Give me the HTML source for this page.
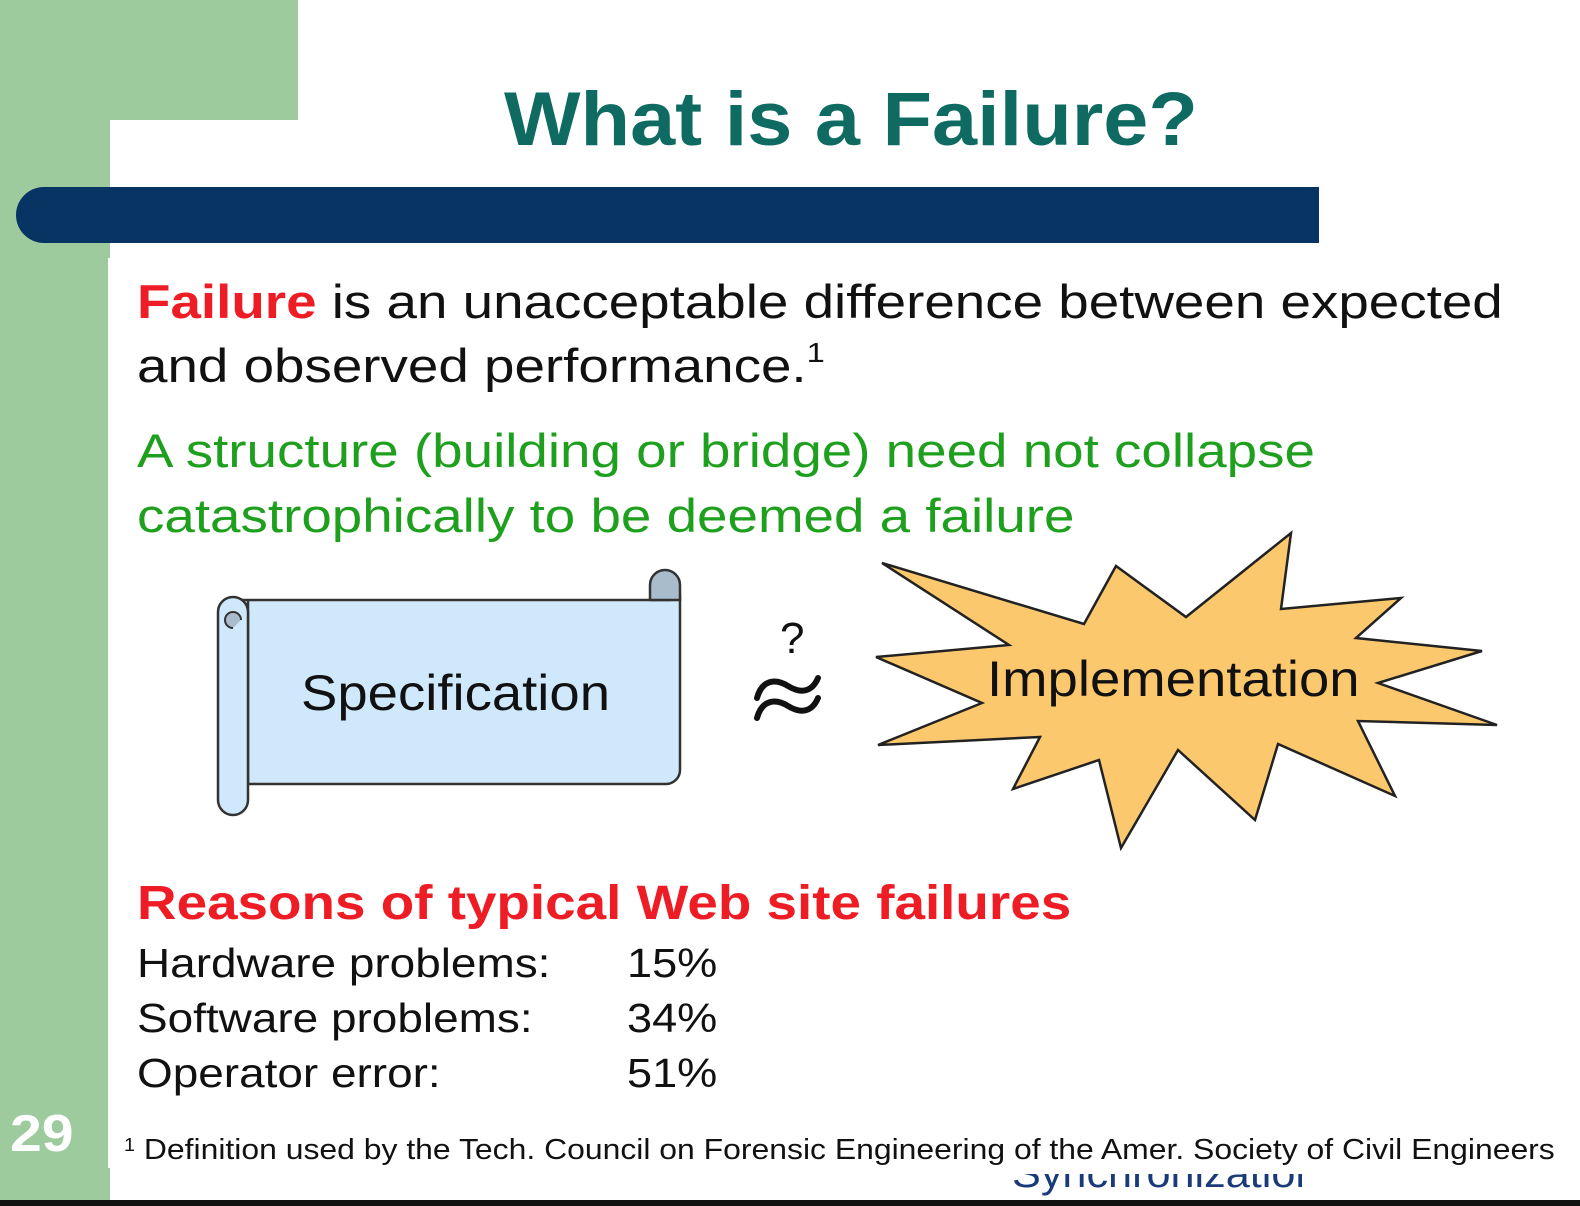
<!DOCTYPE html>
<html><head><meta charset="utf-8"><style>
body{margin:0;width:1580px;height:1206px;position:relative;overflow:hidden;background:#fff;font-family:"Liberation Sans",sans-serif}
.a{position:absolute;white-space:nowrap;transform-origin:0 0}
</style></head><body>
<div class="a" style="left:0;top:0;width:298px;height:120px;background:#9dcb9d"></div>
<div class="a" style="left:0;top:0;width:110px;height:1206px;background:#9dcb9d"></div>
<div class="a" style="left:108px;top:258px;width:4px;height:910px;background:#fff"></div>
<div class="a" style="left:16px;top:187px;width:1303px;height:56px;background:#073463;border-radius:28px 0 0 28px"></div>
<div class="a" style="left:504px;top:76px;font-size:76px;font-weight:bold;color:#0f6b62;transform:scaleX(1.067)">What is a Failure?</div>
<div class="a" style="left:137px;top:270px;font-size:47px;line-height:64px;color:#111;transform:scaleX(1.165)"><span style="color:#ee1c24;font-weight:bold">Failure</span> is an unacceptable difference between expected<br>and observed performance.<sup style="font-size:28px;vertical-align:20px;line-height:0">1</sup></div>
<div class="a" style="left:137px;top:418px;font-size:47px;line-height:65px;color:#1ea01e;transform:scaleX(1.165)">A structure (building or bridge) need not collapse<br>catastrophically to be deemed a failure</div>
<svg class="a" style="left:0;top:0" width="1580" height="1206">
<path d="M240 600 H670 V585 a14 14 0 0 1 10 10 V770 a14 14 0 0 1 -14 14 H248 V600" fill="#cfe8fb" stroke="#333" stroke-width="2.5"/>
<path d="M650 600 V585 a15 15 0 0 1 30 0 V600 H650" fill="#a9bccb" stroke="#333" stroke-width="2.5"/>
<path d="M218 612 a15 15 0 0 1 30 0 V800 a15 15 0 0 1 -30 0 Z" fill="#cfe8fb" stroke="#333" stroke-width="2.5"/>
<path d="M233 628 a8 8 0 0 1 0 -16 a8 8 0 0 1 8 8" fill="#a9bccb" stroke="#333" stroke-width="2"/>
<polygon points="882,563 1084,624 1116,566 1186,617 1291,533 1281,609 1401,598 1356,638 1482,651 1378,683 1497,725 1358,721 1395,796 1278,744 1255,820 1178,750 1121,848 1099,760 1013,789 1040,737 878,745 982,703 876,657 1009,645" fill="#fbc86e" stroke="#222" stroke-width="2.5" stroke-linejoin="miter"/>
<path d="M757 698 C762 680 775 678 788 686 S812 692 818 678 M757 718 C762 700 775 698 788 706 S812 712 818 698" fill="none" stroke="#111" stroke-width="6" stroke-linecap="round"/>
</svg>
<div class="a" style="left:301px;top:664px;font-size:50px;color:#111;transform:scaleX(1.09)">Specification</div>
<div class="a" style="left:987px;top:650px;font-size:50px;color:#111;transform:scaleX(1.09)">Implementation</div>
<div class="a" style="left:780px;top:614px;font-size:44px;color:#111">?</div>
<div class="a" style="left:137px;top:876px;font-size:48px;font-weight:bold;color:#ee1c24;transform:scaleX(1.142)">Reasons of typical Web site failures</div>
<div class="a" style="left:137px;top:936px;font-size:41px;line-height:55px;color:#111;transform:scaleX(1.12)">Hardware problems:<br>Software problems:<br>Operator error:</div>
<div class="a" style="left:627px;top:936px;font-size:41px;line-height:55px;color:#111;transform:scaleX(1.1)">15%<br>34%<br>51%</div>
<div class="a" style="left:10px;top:1104px;font-size:52px;font-weight:bold;color:#fff;transform:scaleX(1.1)">29</div>
<div class="a" style="left:1012px;top:1174px;width:290px;height:22px;overflow:hidden"><div style="font-size:40px;color:#1a3a7a;margin-top:-22px;transform:scaleX(1.08);transform-origin:0 0">Synchronization</div></div>
<div class="a" style="left:124px;top:1134px;font-size:29px;color:#111;transform:scaleX(1.1)"><sup style="font-size:18px;vertical-align:8px">1</sup> Definition used by the Tech. Council on Forensic Engineering of the Amer. Society of Civil Engineers</div>
<div class="a" style="left:0;top:1200px;width:1580px;height:6px;background:#111"></div>
</body></html>
